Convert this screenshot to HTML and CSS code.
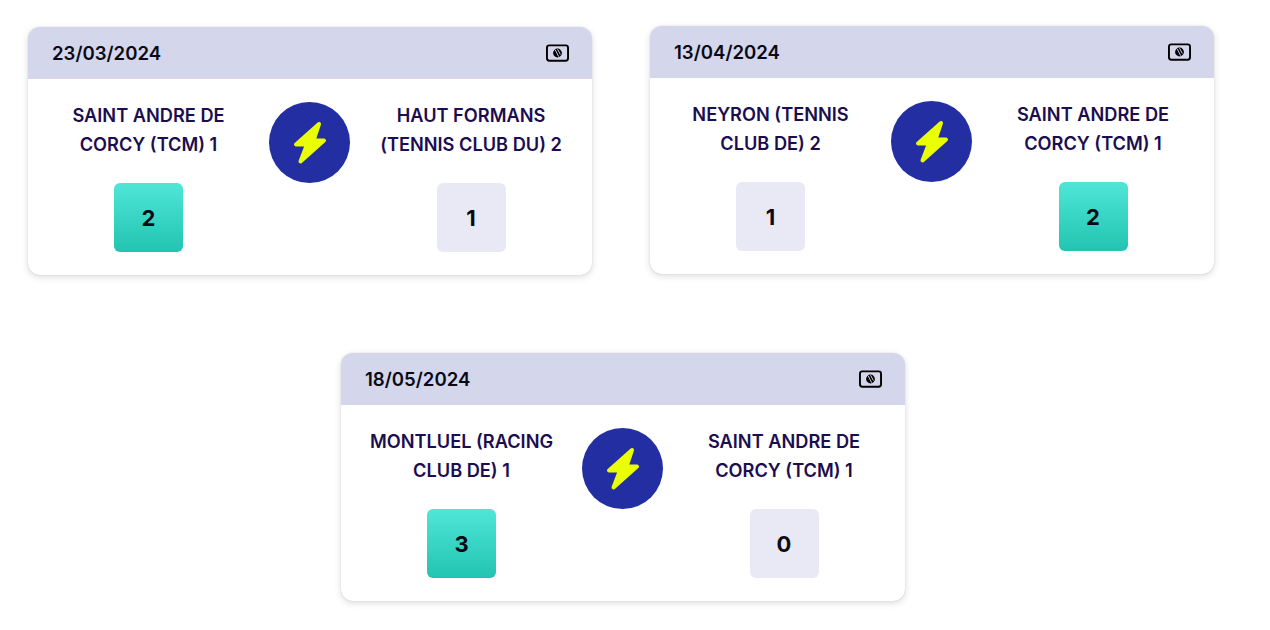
FILE: index.html
```html
<!DOCTYPE html>
<html lang="fr">
<head>
  <meta charset="UTF-8">
  <title>Rencontres</title>
  <link rel="stylesheet" href="styles.css">
</head>
<body>
  <svg class="icon-defs" width="0" height="0">
    <symbol id="court" viewBox="0 0 24 18">
      <rect x="1" y="1" width="22" height="16" rx="2.5" fill="none" stroke="#000" stroke-width="2"/>
      <circle cx="12" cy="9" r="4.6" fill="#000"/>
      <path d="M9.6 5.6 L13.2 12.8 M12 5 L15 10.6" stroke="#d4d6ec" stroke-width="1" fill="none"/>
    </symbol>
    <symbol id="bolt" viewBox="0 0 34 44">
      <path d="M26 3 L3 23.5 H14 L7.5 40.5 L31 19.5 H20.5 Z" fill="#eaff00" stroke="#eaff00" stroke-width="4" stroke-linejoin="round"/>
    </symbol>
  </svg>

  <div class="row row-top">
    <div class="card card-low">
      <div class="card-head">
        <span class="date">23/03/2024</span>
        <svg class="court-icon"><use href="#court"/></svg>
      </div>
      <div class="card-body">
        <div class="team">
          <div class="team-name">SAINT ANDRE DE CORCY (TCM) 1</div>
          <div class="score win">2</div>
        </div>
        <div class="versus"><svg class="bolt-icon"><use href="#bolt"/></svg></div>
        <div class="team">
          <div class="team-name">HAUT FORMANS (TENNIS CLUB DU) 2</div>
          <div class="score">1</div>
        </div>
      </div>
    </div>

    <div class="card">
      <div class="card-head">
        <span class="date">13/04/2024</span>
        <svg class="court-icon"><use href="#court"/></svg>
      </div>
      <div class="card-body">
        <div class="team">
          <div class="team-name">NEYRON (TENNIS CLUB DE) 2</div>
          <div class="score">1</div>
        </div>
        <div class="versus"><svg class="bolt-icon"><use href="#bolt"/></svg></div>
        <div class="team">
          <div class="team-name">SAINT ANDRE DE CORCY (TCM) 1</div>
          <div class="score win">2</div>
        </div>
      </div>
    </div>
  </div>

  <div class="row row-bottom">
    <div class="card">
      <div class="card-head">
        <span class="date">18/05/2024</span>
        <svg class="court-icon"><use href="#court"/></svg>
      </div>
      <div class="card-body">
        <div class="team">
          <div class="team-name">MONTLUEL (RACING CLUB DE) 1</div>
          <div class="score win">3</div>
        </div>
        <div class="versus"><svg class="bolt-icon"><use href="#bolt"/></svg></div>
        <div class="team">
          <div class="team-name">SAINT ANDRE DE CORCY (TCM) 1</div>
          <div class="score">0</div>
        </div>
      </div>
    </div>
  </div>
</body>
</html>
```

FILE: styles.css
```css
html, body {
  height: 100%;
}

body {
  margin: 0;
  padding: 26px 0 0;
  box-sizing: border-box;
  background: #fff;
  font-family: "Inter", "Liberation Sans", sans-serif;
}

.icon-defs {
  position: absolute;
}

.row {
  display: flex;
}

.row-top {
  align-items: flex-start;
  gap: 58px;
  padding-left: 28px;
}

.row-bottom {
  margin-top: 78px;
  padding-left: 341px;
}

.card {
  width: 564px;
  height: 248px;
  box-sizing: border-box;
  background: #fff;
  border-radius: 12px;
  box-shadow: 0 0 1px rgba(0, 0, 0, 0.25), 0 2px 7px rgba(0, 0, 0, 0.14);
}

.card-low {
  margin-top: 1px;
}

.card-head {
  height: 52px;
  padding: 0 23px 0 24px;
  background: #d4d6ec;
  border-radius: 12px 12px 0 0;
  display: flex;
  justify-content: space-between;
  align-items: center;
}

.date {
  font-size: 18.6px;
  font-weight: 600;
  color: #0a0a14;
}

.court-icon {
  width: 23px;
  height: 18px;
}

.card-body {
  display: grid;
  grid-template-columns: 199px 81px 1fr;
  column-gap: 21px;
  padding: 22px 21px 0;
}

.team {
  display: flex;
  flex-direction: column;
  align-items: center;
}

.team-name {
  height: 58px;
  font-size: 18.2px;
  line-height: 28.5px;
  font-weight: 600;
  color: #1b0d4f;
  text-align: center;
}

.score {
  width: 69px;
  height: 69px;
  margin-top: 24px;
  border-radius: 6px;
  background: #e9e9f6;
  display: flex;
  justify-content: center;
  align-items: center;
  font-size: 22px;
  font-weight: 700;
  color: #0a0a14;
}

.score.win {
  background: linear-gradient(180deg, #4fe6d8, #22c4b0);
}

.versus {
  width: 81px;
  height: 81px;
  margin-top: 1px;
  border-radius: 50%;
  background: #232ea3;
  display: flex;
  justify-content: center;
  align-items: center;
}

.bolt-icon {
  width: 34px;
  height: 44px;
}
```
